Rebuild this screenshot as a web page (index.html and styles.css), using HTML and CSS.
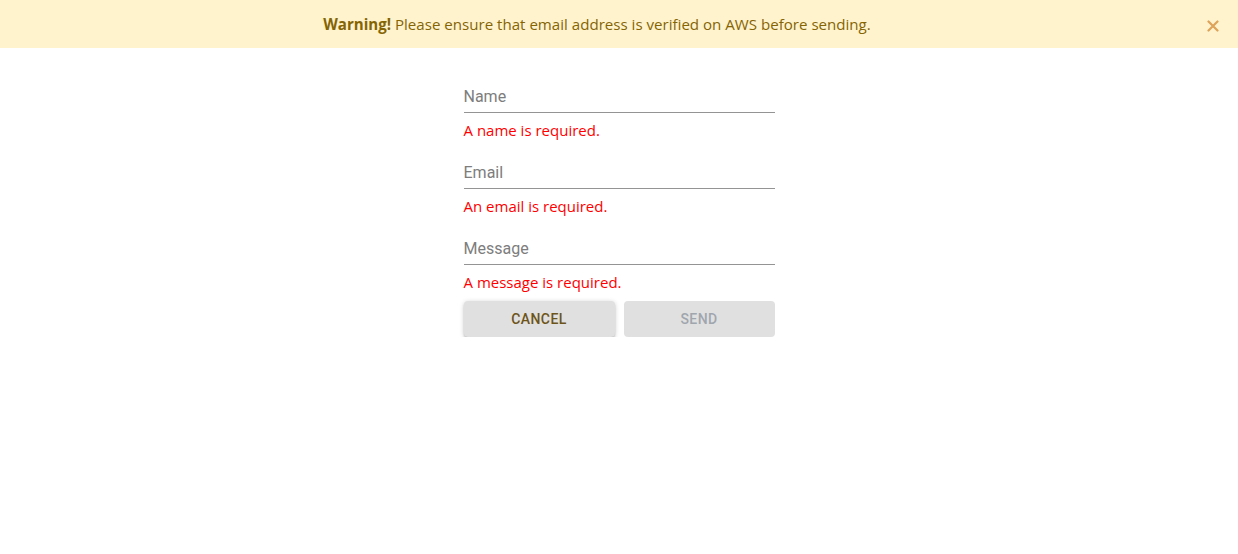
FILE: index.html
```html
<!DOCTYPE html>
<html>
<head>
<meta charset="utf-8">
<link rel="stylesheet" href="styles.css">
</head>
<body>
<div class="alert">
  <div class="alert-text"><strong>Warning!</strong> Please ensure that email address is verified on AWS before sending.</div>
  <button class="close" aria-label="Close">
    <svg width="12" height="12" viewBox="0 0 12 12"><path d="M1.5 1.5L10.5 10.5M10.5 1.5L1.5 10.5" stroke="#dea35a" stroke-width="2.2" stroke-linecap="round"/></svg>
  </button>
</div>
<form class="form">
  <div class="field">
    <div class="input"><span class="label">Name</span></div>
    <div class="error">A name is required.</div>
  </div>
  <div class="field">
    <div class="input"><span class="label">Email</span></div>
    <div class="error">An email is required.</div>
  </div>
  <div class="field">
    <div class="input"><span class="label">Message</span></div>
    <div class="error">A message is required.</div>
  </div>
  <div class="buttons">
    <button type="button" class="btn btn-cancel">Cancel</button>
    <button type="button" class="btn btn-send" disabled>Send</button>
  </div>
</form>
</body>
</html>
```
FILE: styles.css
```css
* { box-sizing: border-box; }
body {
  margin: 0;
  background: #fff;
  font-family: "Open Sans", "Noto Sans", sans-serif;
}
.alert {
  position: relative;
  height: 48px;
  background: #fff3cd;
  color: #856404;
  padding: 12px 64px 12px 20px;
  font-size: 15.1px;
  line-height: 24px;
  text-align: center;
}
.alert strong { font-weight: 700; }
.close {
  position: absolute;
  right: 19px;
  top: 20px;
  width: 12px;
  height: 12px;
  padding: 0;
  border: 0;
  background: none;
  display: flex;
}
.form {
  width: 311px;
  margin: 39px auto 0;
  display: flex;
  flex-direction: column;
}
.field {
  display: flex;
  flex-direction: column;
  margin-bottom: 23px;
}
.field:nth-child(3) { margin-bottom: 9px; }
.input {
  border-bottom: 1px solid #949494;
  padding-bottom: 6px;
}
.label {
  display: block;
  font-family: Roboto, sans-serif;
  font-size: 16px;
  line-height: 19px;
  color: #7d7d7d;
}
.error {
  margin-top: 7px;
  font-size: 15px;
  line-height: 20px;
  color: #ff0000;
}
.buttons {
  display: flex;
  gap: 9px;
}
.btn {
  flex: 1;
  height: 36px;
  border: 0;
  border-radius: 4px;
  background: #e0e0e0;
  font-family: Roboto, sans-serif;
  font-size: 14px;
  font-weight: 500;
  letter-spacing: 0.4px;
  text-transform: uppercase;
}
.btn-cancel {
  color: #6d5419;
  box-shadow: 0 1px 5px rgba(0,0,0,0.2), 0 2px 2px rgba(0,0,0,0.14), 0 3px 1px -2px rgba(0,0,0,0.12);
}
.btn-send {
  color: #a0a6ae;
}
```
